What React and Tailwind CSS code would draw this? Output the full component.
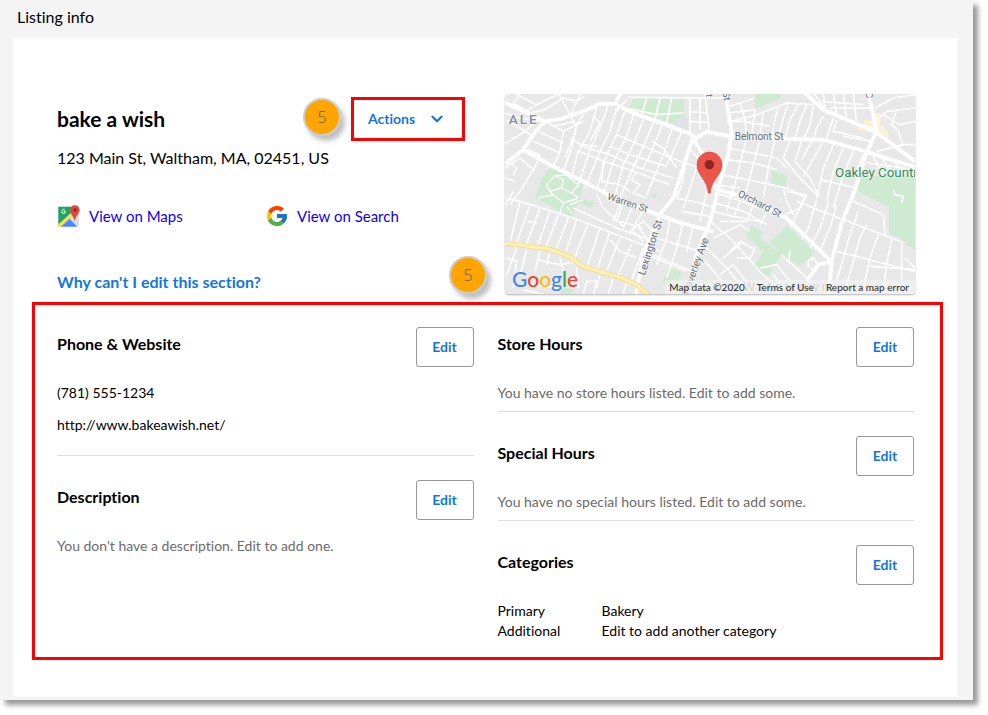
import { FcGoogle } from "react-icons/fc";
import { ChevronDown } from "lucide-react";

const parks = [
  "400,28 552,34 552,118 500,100 388,62",
  "150,240 190,255 250,290 240,330 285,345 270,360 235,345 215,388 105,330 125,270",
  "765,15 842,15 843,30 765,62",
  "815,245 860,265 855,305 813,286",
  "455,318 470,314 468,331 453,328",
  "1085,266 1245,262 1245,486 1220,470 1210,456 1167,436 1167,358 1140,345 1070,306",
  "755,413 787,431 780,451 845,496 805,566 760,536 790,491 735,441",
  "860,411 945,491 900,534 858,510 808,461 838,440",
  "505,541 545,553 530,600 488,585",
  "190,595 220,606 216,620 180,620",
];

const minor = [
  // north-west
  "15,75 60,90 135,100", "15,168 75,130 110,100", "18,95 60,120 100,145", "48,18 110,50 180,15", "110,50 80,68", "60,22 40,45 90,75 135,65 190,30 230,40 255,25",
  "175,15 205,70 230,120 195,210", "215,75 230,40 245,15", "135,100 190,130 250,100", "190,130 180,190 160,235", "160,115 225,100",
  "115,130 190,165", "100,160 180,195", "85,185 120,200 100,250", "15,240 60,210 100,245 60,310 30,350", "15,270 45,280", "30,225 50,240 40,260",
  "250,80 230,110 215,180 190,250", "290,55 270,130 235,190 215,265", "280,85 300,105 270,160", "325,50 300,120 270,185 235,290",
  "350,60 330,130 300,190 255,300", "375,70 350,140 320,200 290,305", "400,82 380,145 340,220 310,320", "430,95 400,170 370,230 345,325",
  "460,105 430,175 395,250 360,330", "485,115 455,190 430,240", "515,125 490,200 470,250 440,320", "545,132 520,190 500,230",
  "210,150 260,180 330,200 420,240 520,270", "235,190 300,215 400,250 510,290", "245,170 290,175", "350,140 430,175 540,220", "330,175 390,200 500,235",
  "310,220 305,280 360,290 390,310", "410,250 395,275 420,290 400,315 440,330", "455,160 490,180 530,240",
  // north park paths and small blocks
  "388,62 470,80 550,75", "440,30 425,80", "480,30 465,95", "515,30 500,105", "570,30 570,135", "600,30 600,125", "565,70 620,75", "565,100 620,103",
  "385,28 690,30", "380,35 350,70", "615,15 628,130",
  // centre east
  "540,220 600,240", "570,185 600,215", "560,215 545,290 530,330", "590,235 570,300 550,360", "620,310 600,400", "530,330 600,345 645,360", "545,370 630,385",
  "510,390 500,450 470,530", "550,400 530,480 500,570", "580,415 560,490", "470,450 600,490", "440,500 560,550",
  "690,55 720,45 765,30", "680,75 730,70 765,65", "695,100 770,80 860,45 940,50", "720,45 735,95 740,140", "765,65 755,140", "790,70 780,150",
  "835,60 825,90 815,150", "865,45 850,90 835,145", "895,50 870,95 855,150", "920,50 900,100 885,152", "940,55 930,110 910,155", "970,85 950,120 940,155", "1000,90 980,150",
  "680,100 730,100 810,115", "685,180 830,210 860,240", "680,215 760,225 830,245", "655,260 720,270 860,300 920,330", "640,290 720,300",
  "740,145 720,230 700,300 680,370", "780,155 760,230 735,320", "825,155 805,240 790,330", "870,160 850,210 900,270 950,320", "905,160 885,220 930,270 960,330",
  "935,160 905,215", "970,160 930,230 910,265", "1000,170 970,240 950,330", "1030,180 1000,250 980,340", "1060,190 1030,260 1000,360", "1090,200 1060,270",
  "960,275 1070,300", "850,300 860,340 880,380",
  // north-east
  "940,15 975,60", "970,15 975,65", "1000,15 1010,85", "1030,15 1040,100", "1060,15 1070,105", "1090,50 970,40", "1120,60 990,60", "1125,60 1180,30 1245,20",
  "1125,100 1160,70 1245,60", "1190,65 1175,110 1195,130 1210,175", "1150,80 1200,110 1245,100", "1010,95 1000,130 1090,150", "1030,145 1120,160", "1130,190 1210,170 1245,170", "1120,205 1150,265", "1140,200 1180,265", "1170,210 1220,260", "1100,225 1245,245",
  // east
  "860,310 915,320 900,360 855,380", "920,320 880,400 870,420", "950,335 925,420 905,455", "985,345 960,420 930,480", "1010,350 990,420 960,490",
  "890,340 1030,395 1200,460", "1060,340 1150,380 1155,440", "1075,370 1050,440 1010,580", "1100,410 1080,450 1040,590", "1135,440 1110,510 1090,600",
  "1175,455 1160,530 1150,610", "1205,460 1205,610", "1010,490 1245,550", "1110,535 1245,545", "1215,510 1245,540", "1180,306 1185,320 1210,325 1205,345",
  // south centre
  "650,315 740,345 830,380", "645,345 730,370 800,410", "640,370 700,385 780,400", "660,400 740,400", "720,340 700,390", "760,350 740,400", "800,370 780,410",
  "630,400 690,450 780,550 830,600", "640,450 720,410 750,430", "620,480 680,540 730,600", "690,490 720,460 765,485 750,510 710,510", "670,510 730,460", "660,560 700,530 760,610",
  "615,520 650,560 690,610", "780,540 830,530 870,580", "820,560 850,600", "845,500 865,520 870,490", "865,520 900,550 930,580", "925,520 940,510 955,530 940,545 925,535 925,520",
  // south-west
  "15,330 60,340 220,390 350,440 480,490", "15,355 40,310", "60,340 30,465", "90,350 45,480", "120,360 75,480", "150,370 110,480", "175,380 135,485", "205,390 165,490", "230,395 195,500", "265,405 220,520", "300,420 260,540", "330,430 290,550",
  "360,450 320,550", "395,470 350,570", "430,480 390,590", "220,360 350,420 450,455", "290,320 310,360 370,415", "320,330 360,350 340,400", "370,345 350,400", "400,350 370,420", "430,365 390,440", "85,400 110,405",
  "330,455 360,490 410,510", "390,430 430,400 460,430", "410,410 440,450", "430,460 400,430", "360,400 430,420",
  "15,510 50,520 40,600", "50,480 20,560", "80,485 60,560", "120,490 105,550", "110,515 180,530 230,520", "150,490 140,530", "180,510 190,550", "230,540 235,600", "250,620 260,580 290,580 280,620", "90,590 180,600", "300,560 290,600", "340,570 325,620", "380,580 370,620", "70,605 130,620", "460,500 600,560",
];

const parkPaths = [
  "140,290 165,262 190,275 185,300 150,310 140,290", "165,262 200,262 235,290 215,315 185,300", "115,330 160,320 190,345 235,330", "190,345 180,375", "150,310 160,320", "215,315 235,330", "200,355 215,375", "210,350 250,335",
];

const major = [
  "15,228 70,185 110,125 135,100 185,92 250,70 300,47 345,48 400,75 570,137 590,150",
  "15,44 60,65 135,100", "345,48 362,15",
  "70,185 150,230 300,306 340,330 470,378 530,401 640,431",
  "580,145 560,205 520,330 480,378 465,420 430,500 408,620",
  "580,155 620,132 690,145 855,153 970,155 1095,190 1245,237",
  "915,15 970,65 1040,95 1125,130 1245,220",
  "1105,15 1120,80 1130,130 1095,205 1065,306 1025,406 995,520 985,620",
  "675,15 695,130 685,200 655,300 635,386 615,440 590,500 560,620",
  "578,150 610,200 630,280 655,305 740,330 860,391 995,521",
  "995,521 955,530 920,580",
];

function StreetMap() {
  const lines = (list) => list.map((p) => <polyline key={p} points={p} />);
  return (
    <svg viewBox="15 18 1230 600" preserveAspectRatio="xMidYMid slice" className="block h-full w-full" role="img" aria-label="Map of the business location">
      <rect x="0" y="0" width="1260" height="640" fill="#e8e8e8" />
      <g fill="#ceead0">{parks.map((p) => <polygon key={p} points={p} />)}</g>
      <polygon points="530,90 566,86 566,128 525,115" fill="#e1e2e8" />
      <g fill="#fcf2d5">
        <polygon points="1070,120 1095,112 1090,95 1110,100 1130,75 1143,80 1140,110 1165,130 1165,150 1130,135 1080,125" />
      </g>
      <g fill="none" stroke="#fff" strokeLinejoin="round">
        <g strokeWidth="5">{lines(minor)}</g>
        <g strokeWidth="4">{lines(parkPaths)}</g>
        <g strokeWidth="12">{lines(major)}</g>
      </g>
      <polyline points="15,466 60,471 150,484 210,506 250,536 300,551 360,568 410,591 450,624" fill="none" stroke="#f5d67c" strokeWidth="14" />
      <polyline points="15,466 60,471 150,484 210,506 250,536 300,551 360,568 410,591 450,624" fill="none" stroke="#fff0b0" strokeWidth="10" />
      <g className="font-[Roboto,sans-serif]" fill="#64717c" stroke="#f4f4f4" strokeWidth="4" paintOrder="stroke" fontSize="29">
        <text x="26" y="108" fontSize="41" fontWeight="500" letterSpacing="6" fill="#8492a6">ALE</text>
        <text x="704" y="156" fontSize="30">Belmont St</text>
        <text transform="translate(320 334) rotate(18)">Warren St</text>
        <text transform="translate(434 563) rotate(-72)" fontSize="31">Lexington St</text>
        <text transform="translate(564 625) rotate(-70)" fontSize="31">Waverley Ave</text>
        <text transform="translate(712 324) rotate(27)" fontSize="30">Orchard St</text>
        <text transform="translate(617 14) rotate(90)" textAnchor="middle">St</text>
        <text transform="translate(670 26) rotate(80)" textAnchor="middle">St</text>
        <text transform="translate(1098 22) rotate(85)" textAnchor="middle">C</text>
        <text x="1005" y="268" fontSize="40" fill="#2f8f55">Oakley Country</text>
        <text x="730" y="610" fontSize="40" letterSpacing="8" fill="#888e94">Watertown</text>
      </g>
      <path d="M628 192a38 38 0 0 0-37 38c0 32 30 42 34 84q3 5 6 0c4-42 35-52 35-84a38 38 0 0 0-38-38z" fill="#ea5649" stroke="#d94a3e" strokeWidth="2" />
      <circle cx="628" cy="230" r="14" fill="#8c2621" />
    </svg>
  );
}

function MapsIcon() {
  return (
    <svg viewBox="0 0 69 66" className="h-[22px] w-[23px] shrink-0" aria-hidden="true">
      <path d="M4 5h44l18 18v41H4z" fill="#dcdcdc" />
      <path d="M4 5h44v14L4 60z" fill="#1fa463" />
      <path d="M36 40l25 25H10z" fill="#4a89f3" />
      <path d="M2 60l42-38 6 8L12 65H2z" fill="#fddb4f" />
      <path d="M53 1a14 14 0 0 0-14 14c0 11 11 17 14 34 3-17 15-23 15-34A14 14 0 0 0 53 1z" fill="#dc4b3e" />
      <circle cx="54" cy="15" r="5" fill="#8c2a22" />
      <path d="M24 15a6 6 0 1 0 2 5h-6" fill="none" stroke="#fff" strokeWidth="3" />
    </svg>
  );
}

function Badge({ className }) {
  return (
    <span className={`flex size-[38px] items-center justify-center rounded-full border-2 border-[#ccc] bg-[#ffa500] font-['Open_Sans',sans-serif] text-base font-light text-[#555] shadow-[4px_5px_5px_rgba(0,0,0,0.25)] ${className}`}>
      5
    </span>
  );
}

function Section({ title, children, className }) {
  return (
    <section className={className}>
      <div className="mb-4 flex items-start justify-between">
        <h3 className="text-base leading-[34px] font-bold">{title}</h3>
        <button type="button" aria-label={`Edit ${title}`} className="h-10 w-[58px] rounded-[3px] border border-[#999] text-sm font-bold text-[#1276e2]">
          Edit
        </button>
      </div>
      {children}
    </section>
  );
}

export default function App() {
  return (
    <div className="bg-white pr-[15px] pb-[15px] font-[Lato,sans-serif] text-black [font-variant-ligatures:none]">
      <main className="bg-[#f4f4f4] pr-[15px] pb-[3px] pl-[13px] shadow-[5px_5px_5px_rgba(0,0,0,0.4)]">
        <h1 className="px-1 pt-1 pb-2 text-base leading-[26px]">Listing info</h1>
        <div className="bg-white pt-[56px] pb-[37px]">
          <div className="mr-[43px] ml-11 grid grid-cols-[448fr_410fr]">
            <div className="relative pt-[3px]">
              <div className="flex items-center">
                <h2 className="mr-auto text-[21px] font-bold">bake a wish</h2>
                <Badge className="mr-[10px] mb-1" />
                <div className="mr-10 border-[3px] border-[#f00]">
                  <button type="button" className="flex h-[38px] w-[108px] items-center justify-between pr-4 pl-[14px] text-sm font-bold text-[#1276e2]">
                    Actions
                    <ChevronDown size={18} strokeWidth={3} aria-hidden="true" />
                  </button>
                </div>
              </div>
              <p className="mt-[5px] text-base">123 Main St, Waltham, MA, 02451, US</p>
              <div className="mt-[34px] flex text-[15px] leading-6 text-[#1100ee]">
                <a href="#maps" className="flex w-[208px] items-center gap-[9px]">
                  <MapsIcon />
                  View on Maps
                </a>
                <a href="#search" className="flex items-center gap-2">
                  <FcGoogle size={24} aria-hidden="true" />
                  View on Search
                </a>
              </div>
              <a href="#help" className="mt-[42px] inline-block text-base font-bold text-[#1276e2]">Why can't I edit this section?</a>
              <Badge className="absolute top-[162px] right-[18px]" />
            </div>
            <div className="relative h-[200px] overflow-hidden rounded shadow-[0_1px_2px_rgba(0,0,0,0.3)]">
              <StreetMap />
              <span className="absolute bottom-[3px] left-[7px] font-[Lato,sans-serif] text-[21px] leading-6 font-medium text-[#4285f4]">
                G<span className="text-[#ea4335]">o</span><span className="text-[#fbbc05]">o</span>g<span className="text-[#34a853]">l</span><span className="text-[#ea4335]">e</span>
              </span>
              <div className="absolute right-0 bottom-0 flex h-[14px] items-center gap-3 bg-[#f2f2f2]/70 pr-[6px] pl-1 font-[Lato,sans-serif] text-[10px] font-medium text-[#333]">
                <span>Map data ©2020</span>
                <a href="#terms">Terms of Use</a>
                <a href="#report">Report a map error</a>
              </div>
            </div>
          </div>
          <div className="mt-2 mr-[15px] ml-[19px] grid grid-cols-2 gap-6 border-[3px] border-[#f00] pt-[22px] pr-[26px] pb-4 pl-[22px] text-sm">
            <div className="flex flex-col gap-6">
              <Section title="Phone & Website" className="border-b border-[#ddd] pb-5">
                <p>(781) 555-1234</p>
                <p className="mt-3">http://www.bakeawish.net/</p>
              </Section>
              <Section title="Description">
                <p className="text-[#6b6b6b]">You don't have a description. Edit to add one.</p>
              </Section>
            </div>
            <div className="flex flex-col gap-6">
              <Section title="Store Hours" className="border-b border-[#ddd] pb-2">
                <p className="text-[#6b6b6b]">You have no store hours listed. Edit to add some.</p>
              </Section>
              <Section title="Special Hours" className="border-b border-[#ddd] pb-2">
                <p className="text-[#6b6b6b]">You have no special hours listed. Edit to add some.</p>
              </Section>
              <Section title="Categories">
                <dl className="grid grid-cols-[104px_1fr]">
                  <dt>Primary</dt>
                  <dd>Bakery</dd>
                  <dt>Additional</dt>
                  <dd>Edit to add another category</dd>
                </dl>
              </Section>
            </div>
          </div>
        </div>
      </main>
    </div>
  );
}
